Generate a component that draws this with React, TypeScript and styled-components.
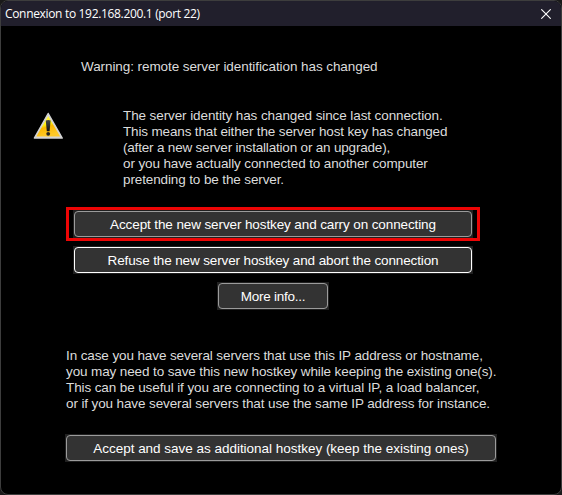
import React from "react";
import styled, { createGlobalStyle } from "styled-components";

const GlobalStyle = createGlobalStyle`
  * { box-sizing: border-box; }
  html, body { margin: 0; background: #1a1a1a; overflow: hidden; }
`;

const Dialog = styled.main`
  display: flex;
  flex-direction: column;
  width: 562px;
  height: 495px;
  overflow: hidden;
  border: 1px solid #3d3d3d;
  border-radius: 8px;
  background: #000;
  color: #dcdcdc;
  font-family: "Liberation Sans", Arial, sans-serif;
  font-size: 13.5px;
`;

const TitleBar = styled.header`
  display: flex;
  flex: none;
  align-items: center;
  justify-content: space-between;
  height: 25px;
  padding: 0 10px 0 4px;
  background: #211f2c;
  color: #fff;
`;

const Title = styled.h1`
  margin: 0;
  font: 400 12px/25px "Open Sans", "Noto Sans", sans-serif;
  letter-spacing: -0.33px;
  white-space: nowrap;
`;

const CloseButton = styled.button`
  display: flex;
  padding: 0;
  border: 0;
  background: none;
  color: #fff;
`;

const Body = styled.section`
  display: flex;
  flex-direction: column;
  align-items: flex-start;
  padding-top: 32px;
`;

const Line = styled.span<{ $spacing?: number }>`
  display: block;
  height: 16px;
  padding-top: 1px;
  line-height: 15px;
  white-space: pre;
  letter-spacing: ${({ $spacing = 0 }) => $spacing}px;
`;

const Heading = styled.div`
  margin-left: 80px;
`;

const Notice = styled.div`
  display: flex;
  gap: 59px;
  margin: 33px 0 0 32px;
`;

const WarningIcon = styled.svg`
  flex: none;
  margin-top: 5px;
`;

const Actions = styled.div`
  display: flex;
  flex-direction: column;
  align-items: center;
  width: 414px;
  margin: 20px 0 0 65px;
`;

const Highlight = styled.div`
  display: flex;
  justify-content: center;
  width: 414px;
  height: 34px;
  margin-bottom: 5px;
  border: 3px solid #ed0505;
`;

const Frame = styled.div<{ $width: number }>`
  flex: none;
  width: ${({ $width }) => $width}px;
  height: 28px;
  padding: 1px;
  background: #202020;
`;

const Button = styled.button<{ $focused?: boolean }>`
  display: flex;
  align-items: center;
  justify-content: center;
  width: 100%;
  height: 26px;
  padding: 0;
  border: 1px solid ${({ $focused }) => ($focused ? "#fff" : "#9b9b9b")};
  border-radius: 4px;
  background: #333;
  color: #fff;
  font: inherit;
`;

const MoreInfo = styled.div`
  margin-top: 8px;
`;

const Explanation = styled.div`
  margin: 37px 0 23px 65px;
`;

const Footer = styled.footer`
  margin-left: 64px;
`;

type TextLine = { text: string; spacing?: number };

const noticeLines: TextLine[] = [
  { text: "The server identity has changed since last connection.", spacing: -0.1 },
  { text: "This means that either the server host key has changed", spacing: -0.15 },
  { text: "(after a new server installation or an upgrade),", spacing: -0.19 },
  { text: "or you have actually connected to another computer", spacing: -0.12 },
  { text: "pretending to be the server.", spacing: -0.12 },
];

const explanationLines: TextLine[] = [
  { text: "In case you have several servers that use this IP address or hostname,", spacing: -0.11 },
  { text: "you may need to save this new hostkey while keeping the existing one(s).", spacing: -0.12 },
  { text: "This can be useful if you are connecting to a virtual IP, a load balancer,", spacing: -0.11 },
  { text: "or if you have several servers that use the same IP address for instance.", spacing: -0.12 },
];

function Paragraph({ lines }: { lines: TextLine[] }) {
  return (
    <div>
      {lines.map(({ text, spacing }) => (
        <Line key={text} $spacing={spacing}>{text}</Line>
      ))}
    </div>
  );
}

function DialogButton({ label, width, focused, spacing }: { label: string; width: number; focused?: boolean; spacing?: number }) {
  return (
    <Frame $width={width}>
      <Button $focused={focused}><Line $spacing={spacing}>{label}</Line></Button>
    </Frame>
  );
}

export default function App() {
  return (
    <>
      <GlobalStyle />
      <Dialog>
        <TitleBar>
          <Title>Connexion to 192.168.200.1 (port 22)</Title>
          <CloseButton aria-label="Close">
            <svg width="10" height="10" viewBox="0 0 10 10" stroke="currentColor" strokeWidth="1.1">
              <path d="M.3.3 9.7 9.7M9.7.3.3 9.7" />
            </svg>
          </CloseButton>
        </TitleBar>
        <Body>
          <Heading><Line $spacing={-0.08}>Warning: remote server identification has changed</Line></Heading>
          <Notice>
            <WarningIcon width="31" height="28" viewBox="0 0 31 28">
              <defs>
                <linearGradient id="amber" x1="0" y1="0" x2="0.35" y2="1">
                  <stop offset="0" stopColor="#fff760" />
                  <stop offset=".5" stopColor="#ffee10" />
                  <stop offset=".62" stopColor="#fbb800" />
                  <stop offset="1" stopColor="#ffc928" />
                </linearGradient>
                <linearGradient id="ink" x1="0" y1="0" x2="0" y2="1">
                  <stop offset="0" stopColor="#4a4a4a" />
                  <stop offset="1" stopColor="#111" />
                </linearGradient>
              </defs>
              <path d="M15.2 1.5 29.2 26.1H1.4Z" fill="#d8d8d8" stroke="#d2d2d2" strokeWidth="1.5" strokeLinejoin="round" />
              <path d="M15.2 4 27.2 24.5H3.3Z" fill="url(#amber)" />
              <path d="M12.8 8.6q2.4-1.3 4.8 0l-1 10.6h-2.8Z" fill="url(#ink)" />
              <circle cx="15.2" cy="21.8" r="1.9" fill="#222" />
            </WarningIcon>
            <Paragraph lines={noticeLines} />
          </Notice>
          <Actions>
            <Highlight>
              <DialogButton width={400} spacing={-0.11} label="Accept the new server hostkey and carry on connecting" />
            </Highlight>
            <DialogButton width={400} focused spacing={-0.125} label="Refuse the new server hostkey and abort the connection" />
            <MoreInfo><DialogButton width={112} spacing={-0.24} label="More info..." /></MoreInfo>
          </Actions>
          <Explanation><Paragraph lines={explanationLines} /></Explanation>
          <Footer>
            <DialogButton width={432} spacing={-0.02} label="Accept and save as additional hostkey (keep the existing ones)" />
          </Footer>
        </Body>
      </Dialog>
    </>
  );
}
